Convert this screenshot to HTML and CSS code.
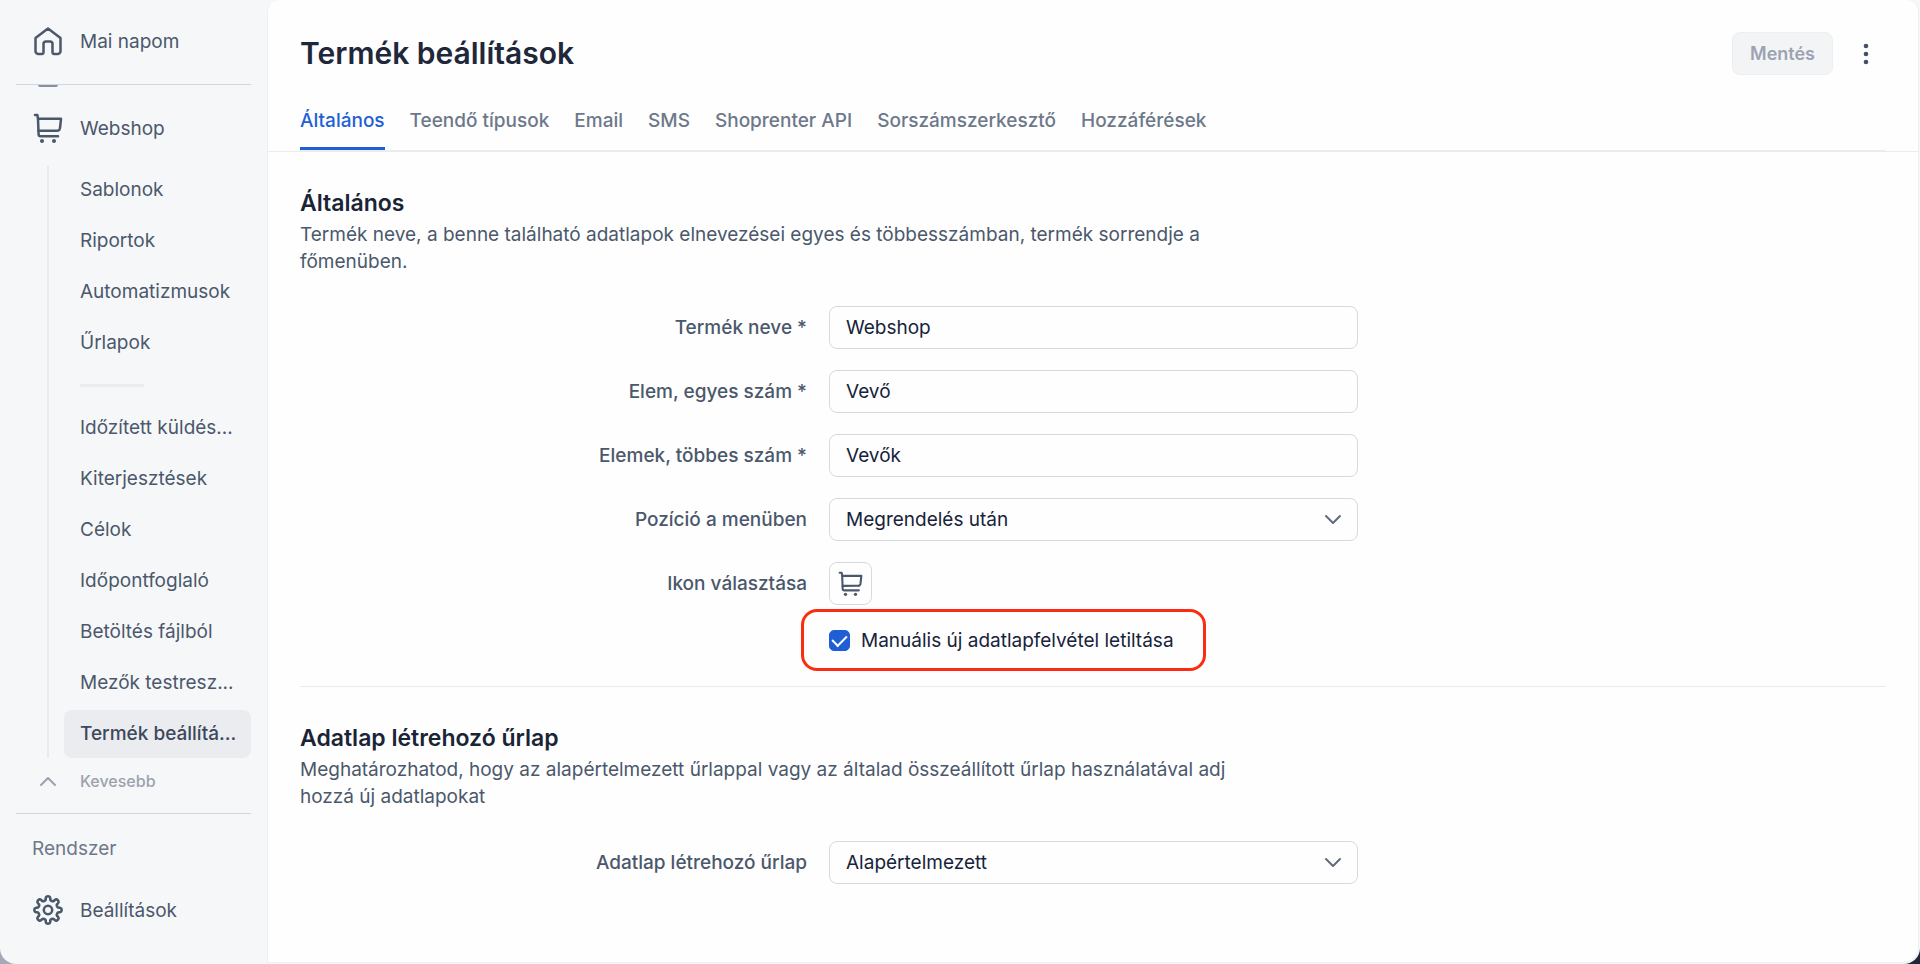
FILE: index.html
```html
<!DOCTYPE html>
<html lang="hu">
<head>
  <meta charset="UTF-8">
  <meta name="viewport" content="width=device-width, initial-scale=1.0">
  <title>Termék beállítások</title>
  <link rel="stylesheet" href="styles.css">
</head>
<body>
  <svg class="sprite" aria-hidden="true">
    <symbol id="icon-cart" viewBox="0 0 30 30">
      <path d="M2 2h2.4l.6 3.8.6 15.400a2 2 0 0 0 2 2H25" />
      <path d="M5 5.800h23l-1 9.400a3 3 0 0 1-3 2.600H5.500" />
      <circle class="dot" cx="9" cy="28" r="2" />
      <circle class="dot" cx="21" cy="28" r="2" />
    </symbol>
    <symbol id="icon-chevron" viewBox="0 0 18 18">
      <path d="M2 5l7 7 7-7" />
    </symbol>
  </svg>

  <div class="app">
    <aside class="sidebar">
      <a href="#" class="nav-item">
        <svg class="icon" viewBox="0 0 30 30">
          <path d="M2.500 12 15 2.500 27.500 12V25a3 3 0 0 1-3 3H21a1.500 1.500 0 0 1-1.500-1.500V18a2.500 2.500 0 0 0-2.500-2.500h-4a2.500 2.500 0 0 0-2.500 2.500v8.500A1.500 1.500 0 0 1 9 28H5.500a3 3 0 0 1-3-3z" />
        </svg>
        <span>Mai napom</span>
      </a>

      <nav class="menu">
        <a href="#" class="nav-item">
          <svg class="icon"><use href="#icon-cart" /></svg>
          <span>Webshop</span>
        </a>
        <div class="submenu">
          <a href="#">Sablonok</a>
          <a href="#">Riportok</a>
          <a href="#">Automatizmusok</a>
          <a href="#">Űrlapok</a>
          <hr>
          <a href="#">Időzített küldés...</a>
          <a href="#">Kiterjesztések</a>
          <a href="#">Célok</a>
          <a href="#">Időpontfoglaló</a>
          <a href="#">Betöltés fájlból</a>
          <a href="#">Mezők testresz...</a>
          <a href="#" class="active">Termék beállítá...</a>
        </div>
        <button type="button" class="less">
          <svg class="chevron up"><use href="#icon-chevron" /></svg>
          <span>Kevesebb</span>
        </button>
      </nav>

      <div class="system">
        <p>Rendszer</p>
        <a href="#" class="nav-item">
          <svg class="icon" viewBox="0 0 30 30">
            <path d="M12.700 3.200A2.350 2.350 0 0 1 17.300 3.200A2.400 2.400 0 0 0 21.700 5A2.350 2.350 0 0 1 25 8.300A2.400 2.400 0 0 0 26.800 12.700A2.350 2.350 0 0 1 26.800 17.300A2.400 2.400 0 0 0 25 21.700A2.350 2.350 0 0 1 21.700 25A2.400 2.400 0 0 0 17.300 26.800A2.350 2.350 0 0 1 12.700 26.800A2.400 2.400 0 0 0 8.300 25A2.350 2.350 0 0 1 5 21.700A2.400 2.400 0 0 0 3.200 17.300A2.350 2.350 0 0 1 3.200 12.700A2.400 2.400 0 0 0 5 8.300A2.350 2.350 0 0 1 8.300 5A2.400 2.400 0 0 0 12.700 3.200z" />
            <circle cx="15" cy="15" r="4.200" />
          </svg>
          <span>Beállítások</span>
        </a>
      </div>
    </aside>

    <main class="content">
      <header class="page-header">
        <h1>Termék beállítások</h1>
        <div class="actions">
          <button type="submit" form="settings" class="save" disabled>Mentés</button>
          <button type="button" class="more" aria-label="További műveletek">
            <svg viewBox="0 0 6 22">
              <circle cx="3" cy="3" r="2.300" />
              <circle cx="3" cy="11" r="2.300" />
              <circle cx="3" cy="19" r="2.300" />
            </svg>
          </button>
        </div>
      </header>

      <div class="tab-bar">
        <nav class="tabs">
          <a href="#" class="active">Általános</a>
          <a href="#">Teendő típusok</a>
          <a href="#">Email</a>
          <a href="#">SMS</a>
          <a href="#">Shoprenter API</a>
          <a href="#">Sorszámszerkesztő</a>
          <a href="#">Hozzáférések</a>
        </nav>
      </div>

      <form id="settings">
        <section>
          <h2>Általános</h2>
          <p class="description">Termék neve, a benne található adatlapok elnevezései egyes és többesszámban, termék sorrendje a főmenüben.</p>
          <div class="fields">
            <label for="name">Termék neve *</label>
            <input type="text" id="name" value="Webshop">

            <label for="singular">Elem, egyes szám *</label>
            <input type="text" id="singular" value="Vevő">

            <label for="plural">Elemek, többes szám *</label>
            <input type="text" id="plural" value="Vevők">

            <label for="position">Pozíció a menüben</label>
            <div class="select">
              <select id="position">
                <option>Megrendelés után</option>
              </select>
              <svg class="chevron"><use href="#icon-chevron" /></svg>
            </div>

            <label for="icon">Ikon választása</label>
            <button type="button" id="icon" class="icon-picker">
              <svg class="icon"><use href="#icon-cart" /></svg>
            </button>
          </div>
          <div class="check-row">
            <label class="check">
              <input type="checkbox" checked>
              <span>Manuális új adatlapfelvétel letiltása</span>
            </label>
          </div>
        </section>

        <section>
          <h2>Adatlap létrehozó űrlap</h2>
          <p class="description">Meghatározhatod, hogy az alapértelmezett űrlappal vagy az általad összeállított űrlap használatával adj hozzá új adatlapokat</p>
          <div class="fields">
            <label for="form-type">Adatlap létrehozó űrlap</label>
            <div class="select">
              <select id="form-type">
                <option>Alapértelmezett</option>
              </select>
              <svg class="chevron"><use href="#icon-chevron" /></svg>
            </div>
          </div>
        </section>
      </form>
    </main>
  </div>
</body>
</html>
```

FILE: styles.css
```css
* {
  box-sizing: border-box;
  margin: 0;
  padding: 0;
}
body {
  background: linear-gradient(to right, #a3a9b5 50%, #1e2638 50%);
  font-family: 'Inter', sans-serif;
  font-size: 19px;
  color: #4b586b;
}
a {
  color: inherit;
  text-decoration: none;
}
button, input, select {
  font: inherit;
  color: inherit;
}
button {
  border: none;
  background: none;
  cursor: pointer;
}
svg {
  fill: none;
  stroke: currentColor;
  stroke-width: 2;
  stroke-linecap: round;
  stroke-linejoin: round;
}
.sprite {
  display: none;
}
.dot {
  fill: currentColor;
  stroke: none;
}
.icon {
  width: 30px;
  height: 30px;
  stroke-width: 2.5;
}
.chevron {
  width: 18px;
  height: 18px;
}
.chevron.up {
  transform: rotate(180deg);
}

.app {
  display: flex;
  min-height: 100vh;
  background: #f6f7f9;
  border-radius: 0 0 16px 16px;
  overflow: hidden;
}

/* Sidebar */
.sidebar {
  width: 267px;
  flex-shrink: 0;
  padding: 17px 16px;
}
.nav-item {
  display: flex;
  align-items: center;
  gap: 17px;
  height: 48px;
  padding-left: 17px;
}
.menu {
  position: relative;
  margin-top: 19px;
  padding: 19px 0 12px;
  border-top: 1px solid #d2d6df;
  border-bottom: 1px solid #d2d5da;
}
/* bottom edge of the item scrolled under the divider */
.menu::before {
  content: "";
  position: absolute;
  top: 0;
  left: 22px;
  width: 20px;
  height: 2px;
  border-radius: 0 0 2px 2px;
  background: #8590a1;
}
.submenu {
  display: flex;
  flex-direction: column;
  gap: 3px;
  margin: 14px 0 0 31px;
  padding-left: 15px;
  border-left: 2px solid #e9ebee;
}
.submenu a {
  padding: 0 16px;
  line-height: 48px;
  border-radius: 8px;
  white-space: nowrap;
}
.submenu .active {
  background: #ebecf0;
  font-weight: 500;
  color: #3c485b;
}
.submenu hr {
  width: 64px;
  margin: 14px 16px;
  border: none;
  border-top: 3px solid #ebecef;
}
.less {
  display: flex;
  align-items: center;
  gap: 23px;
  height: 40px;
  margin-top: 3px;
  padding-left: 23px;
  font-size: 16px;
  font-weight: 500;
  color: #9ba2ae;
}
.system {
  padding-top: 21px;
}
.system p {
  padding-left: 16px;
  line-height: 28px;
  margin-bottom: 23px;
  color: #6d788a;
}

/* Content */
.content {
  flex: 1;
  margin: 0 1px 1px 0;
  background: #fefefe;
  border: 1px solid #eeeff1;
  border-top: none;
  border-radius: 12px 12px 16px 0;
}
.page-header {
  display: flex;
  justify-content: space-between;
  height: 75px;
  padding: 32px 32px 0;
}
h1 {
  font-size: 30px;
  font-weight: 600;
  line-height: 42px;
  color: #1e283a;
}
.actions {
  display: flex;
  align-items: center;
  gap: 12px;
}
.save {
  height: 43px;
  padding: 0 17px;
  border: 1px solid #eceef0;
  border-radius: 8px;
  background: #f3f4f6;
  font-size: 18px;
  font-weight: 600;
  color: #9ca3b2;
}
.more {
  display: flex;
  align-items: center;
  justify-content: center;
  width: 41px;
  height: 43px;
  color: #43506a;
}
.more svg {
  width: 6px;
  height: 22px;
  fill: currentColor;
  stroke: none;
}
.tab-bar {
  padding: 0 32px;
  border-bottom: 1px solid #ebecf0;
}
.tabs {
  display: flex;
  gap: 25px;
  border-bottom: 1px solid #ebecf0;
  font-weight: 500;
  color: #6d788a;
}
.tabs a {
  padding: 33px 0 13px;
  line-height: 26px;
  border-bottom: 3px solid transparent;
}
.tabs .active {
  color: #1f5fd6;
  border-color: #1f5fd6;
}
section {
  margin: 0 32px;
  padding: 35px 0 15px;
}
section + section {
  border-top: 1px solid #eaebee;
}
h2 {
  margin-bottom: 2px;
  font-size: 23px;
  font-weight: 600;
  line-height: 32px;
  color: #1a2436;
}
.description {
  max-width: 930px;
  line-height: 27px;
}
.fields {
  display: grid;
  grid-template-columns: 507px minmax(200px, 529px);
  column-gap: 22px;
  row-gap: 21px;
  align-items: center;
  margin-top: 31px;
}
.fields label {
  text-align: right;
  font-weight: 500;
}
.fields input, select {
  width: 100%;
  height: 43px;
  padding: 0 16px;
  border: 1px solid #d5d9e0;
  border-radius: 8px;
  background: #fefefe;
  color: #17233a;
}
.select {
  position: relative;
}
select {
  appearance: none;
}
.select .chevron {
  position: absolute;
  top: 13px;
  right: 16px;
  color: #5f6b7f;
  pointer-events: none;
}
.icon-picker {
  display: flex;
  align-items: center;
  justify-content: center;
  width: 43px;
  height: 43px;
  border: 1px solid #d5d9e0;
  border-radius: 8px;
}
.icon-picker .icon {
  width: 25px;
  height: 25px;
}
.check-row {
  margin-top: 4px;
  padding-left: 501px;
}
.check {
  display: flex;
  align-items: center;
  gap: 11px;
  width: fit-content;
  height: 62px;
  padding: 0 29px 0 25px;
  border: 3px solid #fb2c10;
  border-radius: 16px;
  color: #17233a;
}
.check input {
  appearance: none;
  display: grid;
  place-items: center;
  width: 21px;
  height: 21px;
  border: 1px solid #5a6f9c;
  border-radius: 5px;
}
.check input:checked {
  border-color: #1f5fd6;
  background: #1f5fd6;
}
.check input:checked::before {
  content: "";
  width: 7px;
  height: 12px;
  margin-bottom: 3px;
  border: solid #fff;
  border-width: 0 2px 2px 0;
  transform: rotate(45deg);
}
```
